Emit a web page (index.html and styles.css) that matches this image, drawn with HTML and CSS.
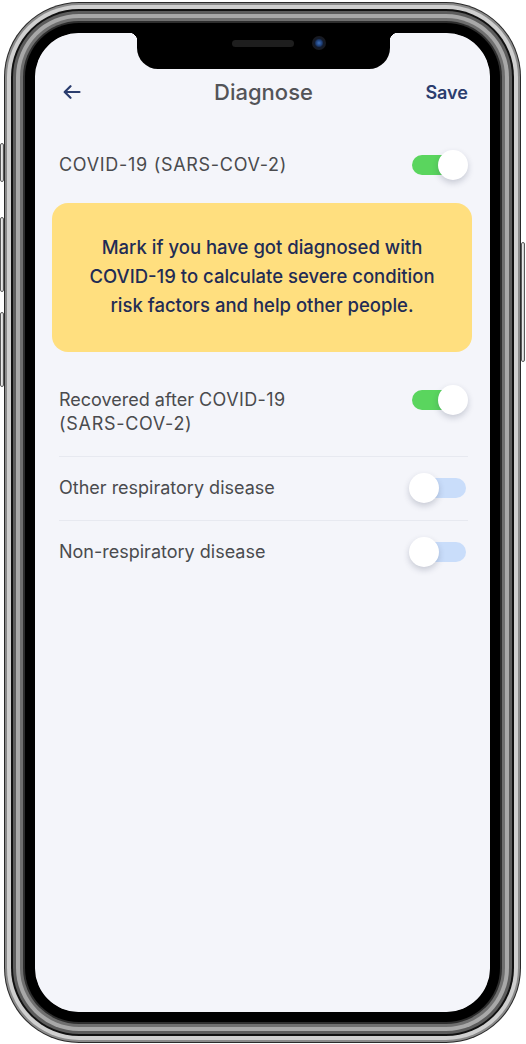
FILE: index.html
```html
<!DOCTYPE html>
<html lang="en">
<head>
<meta charset="utf-8">
<title>Diagnose</title>
<link rel="stylesheet" href="styles.css">
</head>
<body>
<div class="device">
  <span class="side-btn btn-mute"></span>
  <span class="side-btn btn-volup"></span>
  <span class="side-btn btn-voldown"></span>
  <span class="side-btn btn-power"></span>
  <div class="screen">
    <div class="notch"><span class="speaker"></span><span class="camera"></span></div>
    <header class="nav">
      <button class="nav-back" aria-label="Back">
        <svg width="18" height="14" viewBox="0 0 18 14"><path d="M16.5 7H2M7.5 1.2L1.7 7l5.8 5.8" fill="none" stroke="#2b3d6e" stroke-width="2.2" stroke-linecap="round" stroke-linejoin="round"/></svg>
      </button>
      <h1 class="nav-title">Diagnose</h1>
      <button class="nav-save">Save</button>
    </header>
    <main class="content">
      <div class="row row-first">
        <span class="row-label"><span class="caps">COVID-19 (SARS-COV-2)</span></span>
        <span class="toggle on"><span class="track"></span><span class="knob"></span></span>
      </div>
      <div class="notice">
        Mark if you have got diagnosed with<br>COVID-19 to calculate severe condition<br>risk factors and help other people.
      </div>
      <div class="list">
        <div class="row">
          <span class="row-label">Recovered after <span class="caps-soft">COVID-19</span> <span class="caps nowrap">(SARS-COV-2)</span></span>
          <span class="toggle on"><span class="track"></span><span class="knob"></span></span>
        </div>
        <div class="row">
          <span class="row-label">Other respiratory disease</span>
          <span class="toggle"><span class="track"></span><span class="knob"></span></span>
        </div>
        <div class="row">
          <span class="row-label">Non-respiratory disease</span>
          <span class="toggle"><span class="track"></span><span class="knob"></span></span>
        </div>
      </div>
    </main>
  </div>
</div>
</body>
</html>
```

FILE: styles.css
```css
* { box-sizing: border-box; }

html, body {
  margin: 0;
  padding: 0;
  background: #ffffff;
  font-family: Inter, "Liberation Sans", sans-serif;
}

body {
  width: 526px;
  height: 1044px;
  overflow: hidden;
}

.device {
  position: relative;
  width: 455px;
  height: 979px;
  margin: 33px 0 0 35px;
  border-radius: 44px;
  box-shadow:
    0 0 0 10px #000000,
    0 0 0 12px #2e2e2e,
    0 0 0 15px #6f6f6f,
    0 0 0 19px #a8a8a8,
    0 0 0 22px #5c5c5c,
    0 0 0 24px #111111,
    0 0 0 28px #cfcfcf,
    0 0 0 30px #8a8a8a,
    0 0 0 31px #2a2a2a;
}

.side-btn {
  position: absolute;
  width: 4px;
  border: 1px solid #5a5a5a;
  border-radius: 2px;
  background: linear-gradient(90deg, #f2f2f2, #c8c8c8);
}
.btn-mute { left: -35px; top: 110px; height: 39px; }
.btn-volup { left: -35px; top: 184px; height: 75px; }
.btn-voldown { left: -35px; top: 279px; height: 75px; }
.btn-power { left: 486px; top: 209px; height: 120px; }

.screen {
  position: relative;
  height: 100%;
  border-radius: 44px;
  overflow: hidden;
  background: #f4f5fa;
}

.notch {
  position: absolute;
  top: 0;
  left: 102px;
  width: 253px;
  height: 36px;
  background: #000;
  border-radius: 0 0 21px 21px;
}
.notch::before,
.notch::after {
  content: "";
  position: absolute;
  top: 0;
  width: 8px;
  height: 8px;
}
.notch::before {
  left: -8px;
  background: radial-gradient(circle at 0 100%, transparent 8px, #000 8.5px);
}
.notch::after {
  right: -8px;
  background: radial-gradient(circle at 100% 100%, transparent 8px, #000 8.5px);
}
.speaker {
  position: absolute;
  left: 95px;
  top: 7px;
  width: 62px;
  height: 7px;
  border-radius: 4px;
  background: #1e1e1e;
}
.camera {
  position: absolute;
  left: 175px;
  top: 3px;
  width: 14px;
  height: 14px;
  border-radius: 50%;
  background: radial-gradient(circle at 50% 50%, #3d6fb8 0, #1d3d75 3px, #121a2a 4.5px, #1a1a1e 7px);
}

.nav {
  display: grid;
  grid-template-columns: 1fr auto 1fr;
  align-items: center;
  height: 44px;
  margin-top: 37px;
  padding: 0 22px 0 28px;
}
.nav-back {
  display: flex;
  align-items: center;
  justify-self: start;
  border: 0;
  padding: 0;
  background: none;
}
.nav-title {
  margin: 0;
  font-size: 22px;
  font-weight: 500;
  color: #535458;
  transform: translateX(-2px);
}
.nav-save {
  justify-self: end;
  border: 0;
  padding: 0;
  background: none;
  font-family: inherit;
  font-size: 18px;
  font-weight: 600;
  color: #2b3d6e;
}

.content {
  padding: 0 22px 0 24px;
  margin-top: 19px;
}

.row {
  display: flex;
  align-items: flex-start;
  justify-content: space-between;
  gap: 24px;
  padding: 20px 0;
}
.row-label {
  flex: 1;
  font-size: 18px;
  line-height: 24px;
  color: #4a4b4e;
}
.caps { letter-spacing: 0.7px; }
.caps-soft { letter-spacing: 0.4px; }
.nowrap { white-space: nowrap; }

.list {
  margin-top: 16px;
}
.list .row + .row {
  border-top: 1px solid #e7e9f0;
  padding-top: 19px;
}

.toggle {
  position: relative;
  flex: none;
  width: 59px;
  height: 30px;
  margin: -3px 0 -3px 0;
}
.track {
  position: absolute;
  left: 3px;
  top: 5px;
  width: 54px;
  height: 20px;
  border-radius: 10px;
  background: #c9ddfa;
}
.knob {
  position: absolute;
  left: 0;
  top: 0;
  width: 30px;
  height: 30px;
  border-radius: 50%;
  background: #ffffff;
  box-shadow: 0 3px 6px rgba(40, 50, 80, 0.22);
}
.toggle.on .track { background: #5ad55e; }
.toggle.on .knob { left: 29px; }

.notice {
  margin: 6px -4px 0 -7px;
  padding: 30px 6px 32px;
  border-radius: 16px;
  background: #ffdf7f;
  color: #1f2c55;
  font-size: 18.5px;
  font-weight: 500;
  line-height: 29px;
  text-align: center;
}
```
